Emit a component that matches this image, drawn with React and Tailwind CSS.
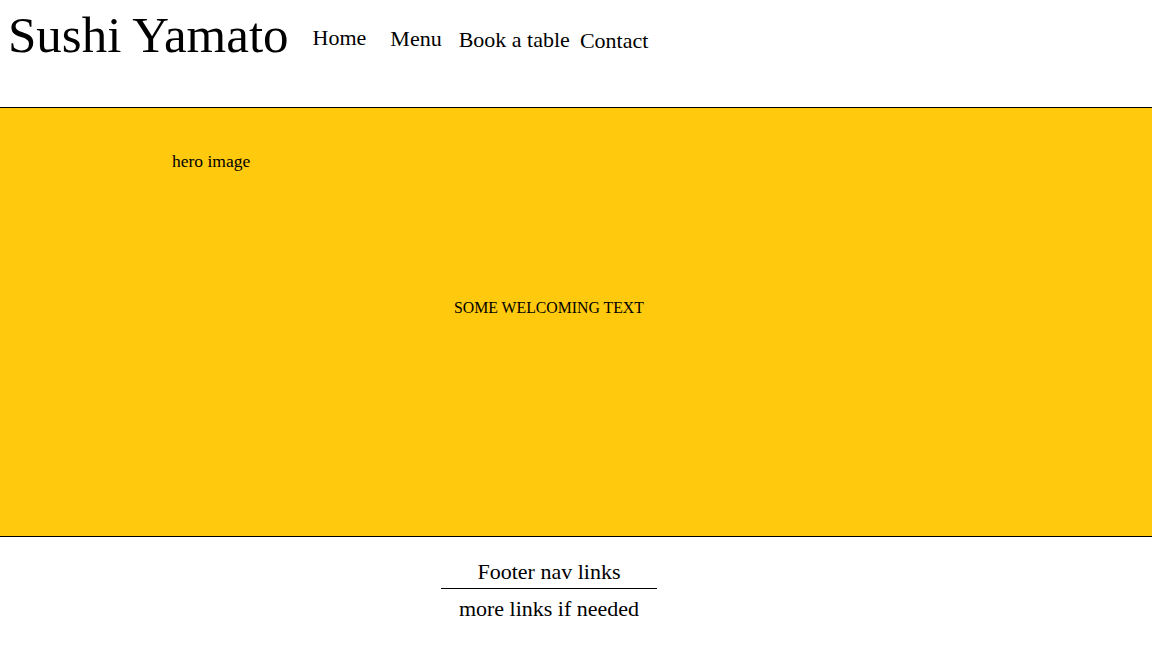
import React from 'react';

const serif = { fontFamily: '"Liberation Serif", "DejaVu Serif", serif' };

export default function App() {
  return (
    <div className="min-h-screen bg-white text-black" style={serif}>
      {/* шапка */}
      <header className="flex items-start h-[108px] border-b border-black">
        <h1 className="ml-[8px] mt-[7px] text-[51px] leading-[56px] font-normal">Sushi Yamato</h1>
        <nav className="flex items-start ml-[24px] mt-[24px] text-[22px] leading-[28px]">
          <a className="mt-0">Home</a>
          <a className="ml-[24px] mt-[1px]">Menu</a>
          <a className="ml-[17px] mt-[2px]">Book a table</a>
          <a className="ml-[10px] mt-[3px]">Contact</a>
        </nav>
      </header>

      {/* hero */}
      <section className="h-[429px] bg-[#ffc90e] border-b border-black flex flex-col">
        <p className="ml-[172px] mt-[42px] text-[17.5px] leading-[22px]">hero image</p>
        <p className="mt-[126px] text-center text-[15.8px] leading-[20px] pr-[54px]">SOME WELCOMING TEXT</p>
      </section>

      {/* футер */}
      <footer className="flex justify-center pt-[21px] pr-[54px]">
        <div className="w-[216px] flex flex-col items-center text-[22px]">
          <span className="w-full text-center leading-[28px] pb-[2px] border-b border-black">Footer nav links</span>
          <span className="leading-[28px] mt-[6px]">more links if needed</span>
        </div>
      </footer>
    </div>
  );
}
